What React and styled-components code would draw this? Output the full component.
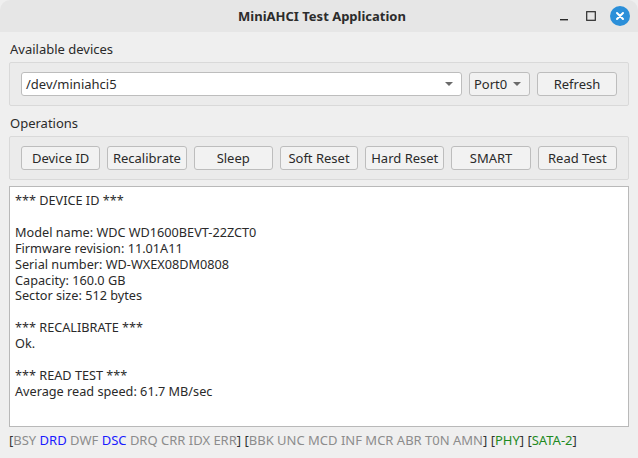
import React from "react";
import styled, { createGlobalStyle } from "styled-components";

const GlobalStyle = createGlobalStyle`
  html, body {
    margin: 0;
    padding: 0;
    background: #efefef;
  }
  body {
    font-family: "Noto Sans", "DejaVu Sans", sans-serif;
    font-size: 13px;
    color: #2a2a2a;
  }
`;

const Window = styled.div`
  width: 638px;
  height: 458px;
  display: flex;
  flex-direction: column;
  background: #efefef;
  border-radius: 10px 10px 0 0;
  overflow: hidden;
`;

const TitleBar = styled.div`
  height: 32px;
  flex-shrink: 0;
  display: grid;
  grid-template-columns: 1fr auto 1fr;
  align-items: center;
  background: #e6e6e6;
  padding: 0 8px 0 0;
`;

const Title = styled.div`
  grid-column: 2;
  font-weight: 700;
  font-size: 13px;
  color: #2c2c2c;
  padding-left: 14px;
`;

const WinControls = styled.div`
  grid-column: 3;
  justify-self: end;
  display: flex;
  align-items: center;
  gap: 11px;
`;

const CtrlBox = styled.div`
  width: 16px;
  height: 16px;
  display: flex;
  align-items: center;
  justify-content: center;
`;

const CloseBtn = styled.div`
  width: 20px;
  height: 20px;
  border-radius: 50%;
  background: #2b8fd9;
  display: flex;
  align-items: center;
  justify-content: center;
`;

const Body = styled.div`
  flex: 1;
  display: flex;
  flex-direction: column;
  padding: 8px 9px 0 9px;
`;

const SectionLabel = styled.div`
  height: 18px;
  line-height: 18px;
  padding-left: 1px;
  margin-bottom: 4px;
`;

const Group = styled.div`
  border: 1px solid #d9d9d9;
  border-radius: 2px;
  background: #ebebeb;
  padding: 9px 11px;
  display: flex;
  gap: 7px;
  margin-bottom: ${({ $mb }) => $mb || 8}px;
`;

const Combo = styled.div`
  height: 24px;
  box-sizing: border-box;
  border: 1px solid #bdbdbd;
  border-radius: 3px;
  background: ${({ $white }) => ($white ? "#ffffff" : "#f2f2f2")};
  display: flex;
  align-items: center;
  padding: 0 6px 0 4px;
  flex: ${({ $grow }) => ($grow ? 1 : "none")};
  width: ${({ $w }) => ($w ? `${$w}px` : "auto")};
  gap: 6px;
`;

const ComboText = styled.span`
  flex: 1;
  white-space: nowrap;
`;

const Arrow = styled.span`
  width: 0;
  height: 0;
  border-left: 4px solid transparent;
  border-right: 4px solid transparent;
  border-top: 4px solid #6a6a6a;
  margin-right: 2px;
`;

const Button = styled.div`
  height: 24px;
  box-sizing: border-box;
  width: ${({ $w }) => $w}px;
  border: 1px solid #bdbdbd;
  border-radius: 3px;
  background: #f2f2f2;
  display: flex;
  align-items: center;
  justify-content: center;
  white-space: nowrap;
`;

const Output = styled.div`
  height: 241px;
  box-sizing: border-box;
  border: 1px solid #b9b9b9;
  background: #ffffff;
  padding: 6px 5px;
  font-size: 12.7px;
  line-height: 15.9px;
  white-space: pre;
  margin-bottom: 4px;
`;

const Status = styled.div`
  height: 18px;
  line-height: 18px;
  color: #8c8c8c;
  white-space: pre;
`;

const Br = styled.span`
  color: #333333;
`;

const On = styled.span`
  color: ${({ $c }) => ($c === "green" ? "#1e8a1e" : "#1a1aff")};
`;

const outputText = `*** DEVICE ID ***

Model name: WDC WD1600BEVT-22ZCT0
Firmware revision: 11.01A11
Serial number: WD-WXEX08DM0808
Capacity: 160.0 GB
Sector size: 512 bytes

*** RECALIBRATE ***
Ok.

*** READ TEST ***
Average read speed: 61.7 MB/sec`;

const ops = [
  ["Device ID", 80],
  ["Recalibrate", 80],
  ["Sleep", 80],
  ["Soft Reset", 79],
  ["Hard Reset", 80],
  ["SMART", 80],
  ["Read Test", 80],
];

export default function App() {
  return (
    <>
      <GlobalStyle />
      <Window>
        <TitleBar>
          <Title>MiniAHCI Test Application</Title>
          <WinControls>
            <CtrlBox>
              <svg width="12" height="12" viewBox="0 0 12 12">
                <rect x="2" y="9" width="8" height="1.4" fill="#2a2a2a" />
              </svg>
            </CtrlBox>
            <CtrlBox>
              <svg width="12" height="12" viewBox="0 0 12 12">
                <rect x="1.7" y="1.7" width="8.6" height="8.6" fill="none" stroke="#2a2a2a" strokeWidth="1.2" />
              </svg>
            </CtrlBox>
            <CloseBtn>
              <svg width="10" height="10" viewBox="0 0 10 10">
                <path d="M2 2L8 8M8 2L2 8" stroke="#fff" strokeWidth="2" strokeLinecap="round" />
              </svg>
            </CloseBtn>
          </WinControls>
        </TitleBar>
        <Body>
          <SectionLabel>Available devices</SectionLabel>
          <Group $mb={8}>
            <Combo $grow $white>
              <ComboText>/dev/miniahci5</ComboText>
              <Arrow />
            </Combo>
            <Combo $w={61}>
              <ComboText>Port0</ComboText>
              <Arrow />
            </Combo>
            <Button $w={80}>Refresh</Button>
          </Group>
          <SectionLabel>Operations</SectionLabel>
          <Group $mb={6}>
            {ops.map(([label, w]) => (
              <Button key={label} $w={w}>
                {label}
              </Button>
            ))}
          </Group>
          <Output>{outputText}</Output>
          <Status>
            <Br>[</Br>BSY <On>DRD</On> DWF <On>DSC</On> DRQ CRR IDX ERR<Br>]</Br>{" "}
            <Br>[</Br>BBK UNC MCD INF MCR ABR T0N AMN<Br>]</Br>{" "}
            <Br>[</Br><On $c="green">PHY</On><Br>]</Br>{" "}
            <Br>[</Br><On $c="green">SATA-2</On><Br>]</Br>
          </Status>
        </Body>
      </Window>
    </>
  );
}
